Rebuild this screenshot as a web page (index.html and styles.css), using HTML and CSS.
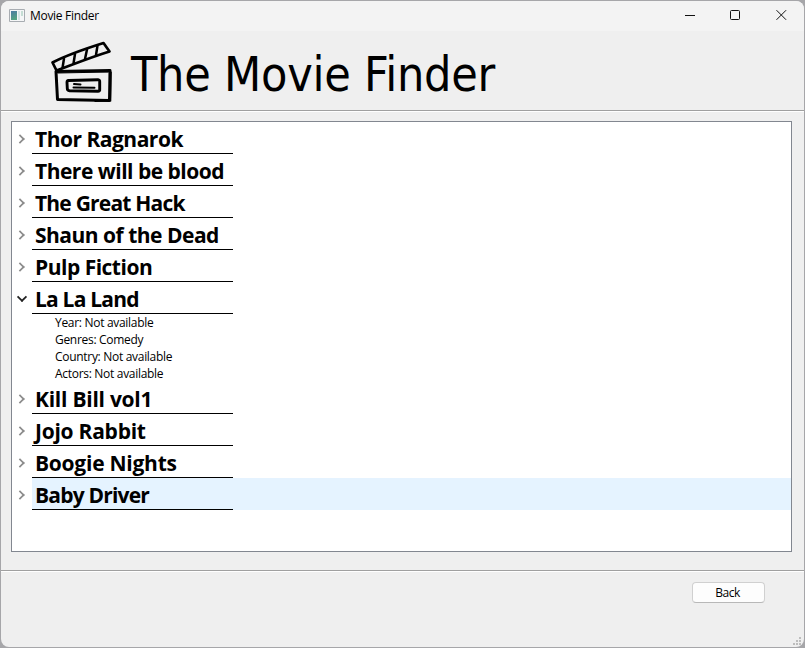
FILE: index.html
```html
<!DOCTYPE html>
<html lang="en">
<head>
<meta charset="utf-8">
<title>Movie Finder</title>
<link rel="stylesheet" href="styles.css">
</head>
<body>
<div class="window">
  <div class="titlebar">
    <svg class="app-icon" width="16" height="14" viewBox="0 0 16 14"><defs><linearGradient id="g" x2="0.3" y2="1"><stop stop-color="#4c7ba4"/><stop offset="1" stop-color="#55a382"/></linearGradient></defs><path fill="#f5f6f7" stroke="#a7acb1" d="M.5.5h15v12h-15z"/><path fill="url(#g)" d="M2 2h6v9H2z"/><path fill="#d5e4e4" d="M9 2h2v9H9z"/><path fill="#c5ddd4" d="M12 2h2v5h-2z"/></svg>
    <span class="caption">Movie Finder</span>
    <svg class="controls" width="104" height="12" viewBox="0 0 104 12" fill="none" stroke="#111"><path d="M0 6.5h10"/><rect x="45.5" y="1.5" width="9" height="9" rx="1"/><path d="M91.5 1.2l9.6 9.6m0-9.6l-9.6 9.6"/></svg>
  </div>
  <header class="header">
    <svg class="logo" width="64" height="64" viewBox="0 0 64 64" fill="none" stroke="#000" stroke-linecap="round" stroke-linejoin="round">
      <path stroke-width="2.700" d="M2.500 21.500C17 14 36 7.500 53.500 2L59.500 10.500C40 16.500 23 23.500 6.500 29.500Z"/>
      <path stroke-width="2.500" d="M14 17.500L12.500 27M25 13L23.500 22.500M37 8.500L35 18M47.500 4.500L46 14"/>
      <path stroke-width="3" d="M6 30.500L60 29.500L59.500 59.500L7.500 58.500Z"/>
      <path stroke-width="1.200" d="M8 32L58 31M61.200 31L60.700 60L45 60.500"/>
      <path stroke-width="2.900" d="M18.500 39.500L48 38.800Q50 39 49.700 41V48.500Q50 50.200 48 50.200L19.500 49.700Q17.300 49.500 17.300 47.500L17 41.500Q17 39.700 18.500 39.500Z"/>
      <path stroke-width="2" d="M23.500 46.500L44.500 46.700M24 43L30.500 43.500"/>
    </svg>
    <h1>The Movie Finder</h1>
  </header>
  <main class="content">
    <ul class="tree">
      <li class="movie"><i class="arrow"></i><span>Thor Ragnarok</span></li>
      <li class="movie"><i class="arrow"></i><span>There will be blood</span></li>
      <li class="movie tight"><i class="arrow"></i><span>The Great Hack</span></li>
      <li class="movie"><i class="arrow"></i><span>Shaun of the Dead</span></li>
      <li class="movie"><i class="arrow"></i><span>Pulp Fiction</span></li>
      <li class="movie open tight"><i class="arrow"></i><span>La La Land</span></li>
      <li class="detail">Year: Not available</li>
      <li class="detail">Genres: Comedy</li>
      <li class="detail">Country: Not available</li>
      <li class="detail">Actors: Not available</li>
      <li class="movie loose"><i class="arrow"></i><span>Kill Bill vol1</span></li>
      <li class="movie loose"><i class="arrow"></i><span>Jojo Rabbit</span></li>
      <li class="movie loose"><i class="arrow"></i><span>Boogie Nights</span></li>
      <li class="movie hover tight"><i class="arrow"></i><span>Baby Driver</span></li>
    </ul>
  </main>
  <footer class="footer">
    <button class="back">Back</button>
    <svg class="grip" width="9" height="9" viewBox="0 0 9 9" fill="#bdbdbd"><path d="M6 0h2v2H6zM3 3h2v2H3zM6 3h2v2H6zM0 6h2v2H0zM3 6h2v2H3zM6 6h2v2H6z"/></svg>
  </footer>
</div>
</body>
</html>
```

FILE: styles.css
```css
* { box-sizing: border-box; }
body {
  margin: 0;
  width: 805px;
  height: 648px;
  padding: 1px;
  overflow: hidden;
  background: #a6a6a9;
  color: #000;
  font-family: "Noto Sans", "Open Sans", sans-serif;
}
.window {
  display: flex;
  flex-direction: column;
  width: 803px;
  height: 646px;
  background: #efefef;
  border-radius: 8px;
  overflow: hidden;
}
.titlebar {
  display: flex;
  align-items: center;
  height: 30px;
  padding: 0 15px 0 8px;
  background: #f3f3f3;
}
.app-icon { margin-top: -1px; }
.caption {
  margin-left: 5px;
  font: 12px/16px "Open Sans", sans-serif;
  letter-spacing: -0.3px;
}
.controls { margin-left: auto; margin-top: -2px; }
.header {
  display: flex;
  height: 81px;
  padding-left: 49px;
  border-bottom: 1px solid #fff;
  box-shadow: inset 0 -1px #a0a0a0;
}
.logo { margin-top: 9.5px; }
h1 {
  margin: 10px 0 0 17px;
  font: 48px/66px "DejaVu Sans Condensed", "DejaVu Sans", sans-serif;
  font-stretch: condensed;
  letter-spacing: -0.25px;
  white-space: nowrap;
}
.content {
  height: 460px;
  padding: 9px 12px 0 10px;
  border-bottom: 1px solid #fff;
  box-shadow: inset 0 -1px #a0a0a0;
}
.tree {
  height: 431px;
  margin: 0;
  padding: 0;
  list-style: none;
  background: #fff;
  border: 1px solid #828790;
}
.movie { display: flex; height: 32px; }
.movie span {
  width: 201px;
  padding-left: 3px;
  border-bottom: 1px solid #000;
  font: bold 21px/35px "Open Sans", sans-serif;
  letter-spacing: -0.5px;
  white-space: nowrap;
}
.movie.tight span { letter-spacing: -0.8px; }
.movie.loose span { letter-spacing: -0.25px; }
.arrow { width: 20px; padding: 13px 0 0 4px; }
.arrow::before {
  content: "";
  display: block;
  width: 6px;
  height: 6px;
  border: solid #8c8c8c;
  border-width: 2px 2px 0 0;
  transform: rotate(45deg) scale(0.85);
}
.open .arrow { padding: 11px 0 0 6px; }
.open .arrow::before {
  border-color: #222;
  transform: rotate(135deg) scale(0.9);
}
.hover { background: linear-gradient(90deg, #fff 20px, #e5f3ff 20px); }
.detail {
  height: 17px;
  padding-left: 43px;
  font: 12px/18px "Open Sans", sans-serif;
  letter-spacing: -0.3px;
}
.footer {
  position: relative;
  display: flex;
  flex: 1;
  justify-content: flex-end;
  padding: 10px 39px 0 0;
}
.back {
  width: 73px;
  height: 21px;
  padding: 0 2px 0 0;
  border: 1px solid #d0d0d0;
  border-bottom-color: #b8b8b8;
  border-radius: 4px;
  background: #fdfdfd;
  color: #000;
  font: 12px/19px "Open Sans", sans-serif;
  letter-spacing: -0.5px;
}
.grip { position: absolute; right: 2px; bottom: 1px; }
```
